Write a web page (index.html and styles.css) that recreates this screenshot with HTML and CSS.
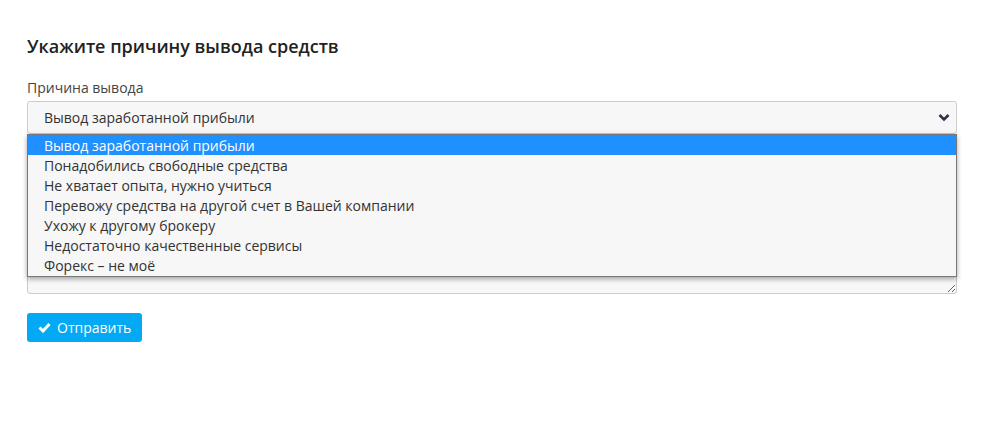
FILE: index.html
```html
<!DOCTYPE html>
<html lang="ru">
  <head>
    <meta charset="UTF-8" />
    <meta name="viewport" content="width=device-width, initial-scale=1.0" />
    <title>Вывод средств</title>
    <link rel="stylesheet" href="styles.css">
  </head>
  <body>
    <div class="page">
      <h2 class="title">Укажите причину вывода средств</h2>

      <div class="form-group">
        <label class="form-label" for="reason">Причина вывода</label>
        <div class="select-wrap">
          <div class="select" id="reason">
            <span>Вывод заработанной прибыли</span>
            <svg class="chevron" width="12" height="9" viewBox="0 0 12 9">
              <path d="M1.5 2 L6 6.5 L10.5 2" fill="none" stroke="#2c3345" stroke-width="2.6" />
            </svg>
          </div>
          <ul class="dropdown">
            <li class="active">Вывод заработанной прибыли</li>
            <li>Понадобились свободные средства</li>
            <li>Не хватает опыта, нужно учиться</li>
            <li>Перевожу средства на другой счет в Вашей компании</li>
            <li>Ухожу к другому брокеру</li>
            <li>Недостаточно качественные сервисы</li>
            <li>Форекс – не моё</li>
          </ul>
        </div>
      </div>

      <div class="form-group">
        <textarea class="textarea" id="comment"></textarea>
      </div>

      <button class="btn-send">
        <svg width="13" height="11" viewBox="0 0 13 11">
          <path d="M1.5 5.5 L5 9 L11.5 2" fill="none" stroke="#fff" stroke-width="3" />
        </svg>
        Отправить
      </button>
    </div>
  </body>
</html>
```

FILE: styles.css
```css
body {
  margin: 0;
  background: #fff;
  font-family: "Open Sans", "Liberation Sans", sans-serif;
  color: #333;
}
.page {
  padding: 34px 24px 0 27px;
}
.title {
  font-size: 18px;
  line-height: 24px;
  font-weight: 600;
  color: #222;
  margin: 0 0 20px;
}
.form-group {
  margin-bottom: 15px;
}
.form-label {
  display: block;
  font-size: 14px;
  line-height: 20px;
  color: #444;
  margin-bottom: 3px;
}
.select-wrap {
  position: relative;
}
.select {
  box-sizing: border-box;
  height: 33px;
  display: flex;
  align-items: center;
  justify-content: space-between;
  padding: 0 6px 0 16px;
  background: #f7f7f7;
  border: 1px solid #ccc;
  border-radius: 3px;
  font-size: 14px;
  color: #333;
}
.chevron {
  display: block;
}
.dropdown {
  position: absolute;
  top: 33px;
  left: 0;
  right: 0;
  margin: 0;
  padding: 0 0 1px;
  list-style: none;
  background: #f7f7f7;
  border: 1px solid #777;
  box-shadow: 0 2px 5px rgba(0, 0, 0, 0.35);
  z-index: 5;
}
.dropdown li {
  height: 20px;
  line-height: 21px;
  padding-left: 16px;
  font-size: 14px;
  color: #333;
}
.dropdown li.active {
  background: #1e90ff;
  color: #fff;
}
.textarea {
  display: block;
  box-sizing: border-box;
  width: 100%;
  height: 122px;
  margin-top: 38px;
  background: #f7f7f7;
  border: 1px solid #ccc;
  border-radius: 3px;
  font-family: inherit;
}
.btn-send {
  margin-top: 19px;
  display: flex;
  align-items: center;
  gap: 6px;
  height: 29px;
  padding: 0 11px 0 11px;
  background: #03a9f4;
  color: #fff;
  border: none;
  border-radius: 3px;
  font-family: inherit;
  font-size: 14px;
}
```
